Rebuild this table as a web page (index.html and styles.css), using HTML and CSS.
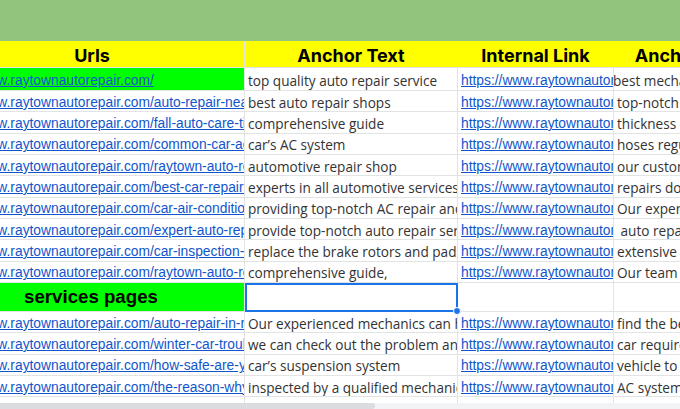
FILE: index.html
```html
<!DOCTYPE html>
<html>
<head>
<meta charset="utf-8">
<link rel="stylesheet" href="styles.css">
</head>
<body>
<div class="page">
  <div class="band"></div>
  <div class="sheet">
    <div class="c h h1">Urls</div>
    <div class="c h">Anchor Text</div>
    <div class="c h">Internal Link</div>
    <div class="c h">Anchor Text</div>

    <div class="c u green"><a>https://www.raytownautorepair.com/</a></div>
    <div class="c t">top quality auto repair service</div>
    <div class="c l"><a>https://www.raytownautorepair.com/auto-repair</a></div>
    <div class="c t d1">best mechanics in raytown</div>

    <div class="c u"><a>https://www.raytownautorepair.com/auto-repair-near-me</a></div>
    <div class="c t">best auto repair shops</div>
    <div class="c l"><a>https://www.raytownautorepair.com/</a></div>
    <div class="c t">top-notch service</div>

    <div class="c u"><a>https://www.raytownautorepair.com/fall-auto-care-tips</a></div>
    <div class="c t">comprehensive guide</div>
    <div class="c l"><a>https://www.raytownautorepair.com/</a></div>
    <div class="c t">thickness of</div>

    <div class="c u"><a>https://www.raytownautorepair.com/common-car-ac-problems</a></div>
    <div class="c t">car’s AC system</div>
    <div class="c l"><a>https://www.raytownautorepair.com/</a></div>
    <div class="c t">hoses regularly</div>

    <div class="c u"><a>https://www.raytownautorepair.com/raytown-auto-repair</a></div>
    <div class="c t">automotive repair shop</div>
    <div class="c l"><a>https://www.raytownautorepair.com/</a></div>
    <div class="c t">our customers</div>

    <div class="c u"><a>https://www.raytownautorepair.com/best-car-repair-shop</a></div>
    <div class="c t">experts in all automotive services</div>
    <div class="c l"><a>https://www.raytownautorepair.com/</a></div>
    <div class="c t">repairs done</div>

    <div class="c u"><a>https://www.raytownautorepair.com/car-air-conditioning</a></div>
    <div class="c t">providing top-notch AC repair and</div>
    <div class="c l"><a>https://www.raytownautorepair.com/</a></div>
    <div class="c t">Our experts</div>

    <div class="c u"><a>https://www.raytownautorepair.com/expert-auto-repair</a></div>
    <div class="c t">provide top-notch auto repair services</div>
    <div class="c l"><a>https://www.raytownautorepair.com/</a></div>
    <div class="c t">&nbsp;auto repair</div>

    <div class="c u"><a>https://www.raytownautorepair.com/car-inspection-checklist</a></div>
    <div class="c t">replace the brake rotors and pads</div>
    <div class="c l"><a>https://www.raytownautorepair.com/</a></div>
    <div class="c t">extensive</div>

    <div class="c u"><a>https://www.raytownautorepair.com/raytown-auto-repair-guide</a></div>
    <div class="c t">comprehensive guide,</div>
    <div class="c l"><a>https://www.raytownautorepair.com/</a></div>
    <div class="c t">Our team</div>

    <div class="c s green">services pages</div>
    <div class="c sel"><span class="handle"></span></div>
    <div class="c"></div>
    <div class="c"></div>

    <div class="c u"><a>https://www.raytownautorepair.com/auto-repair-in-raytown</a></div>
    <div class="c t">Our experienced mechanics can help</div>
    <div class="c l"><a>https://www.raytownautorepair.com/</a></div>
    <div class="c t">find the best</div>

    <div class="c u"><a>https://www.raytownautorepair.com/winter-car-trouble</a></div>
    <div class="c t">we can check out the problem and</div>
    <div class="c l"><a>https://www.raytownautorepair.com/</a></div>
    <div class="c t">car requires</div>

    <div class="c u"><a>https://www.raytownautorepair.com/how-safe-are-your-tires</a></div>
    <div class="c t">car’s suspension system</div>
    <div class="c l"><a>https://www.raytownautorepair.com/</a></div>
    <div class="c t">vehicle to</div>

    <div class="c u"><a>https://www.raytownautorepair.com/the-reason-why</a></div>
    <div class="c t">inspected by a qualified mechanic</div>
    <div class="c l"><a>https://www.raytownautorepair.com/</a></div>
    <div class="c t">AC system</div>

    <div class="c"></div>
    <div class="c"></div>
    <div class="c"></div>
    <div class="c"></div>
  </div>
  <div class="scrollbar"><div class="thumb"></div></div>
</div>
</body>
</html>
```
FILE: styles.css
```css
html, body {
  margin: 0;
  padding: 0;
  background: #ffffff;
}
.page {
  position: relative;
  width: 680px;
  height: 409px;
  overflow: hidden;
}
.band {
  height: 41px;
  background: #93c47d;
}
.sheet {
  display: grid;
  grid-template-columns: 312px 213px 156px 150px;
  grid-template-rows: 27px 23px repeat(9, 21.33px) 29px repeat(5, 21.33px);
  margin-left: -67px;
  width: max-content;
}
.c {
  box-sizing: border-box;
  border-right: 1px solid #e2e3e3;
  border-bottom: 1px solid #e2e3e3;
  overflow: hidden;
  white-space: nowrap;
  padding: 0 3px;
  display: flex;
  align-items: center;
  position: relative;
}
.h {
  background: #ffff00;
  justify-content: center;
  font-family: Inter, "Liberation Sans", sans-serif;
  font-weight: 700;
  font-size: 18px;
  color: #000;
  padding-top: 3px;
}
.h1 {
  padding-left: 10px;
}
.green {
  background: #00ff00;
}
.u a, .l a {
  font-family: "Liberation Sans", Arial, sans-serif;
  font-size: 13.8px;
  color: #1155cc;
  text-decoration: underline;
}
.u, .l, .t {
  padding-top: 2px;
}
.t {
  font-family: "Open Sans", "Noto Sans", sans-serif;
  font-size: 13.6px;
  color: #333333;
}
.d1 {
  text-indent: -4px;
}
.s {
  justify-content: center;
  font-family: "Liberation Sans", Arial, sans-serif;
  font-weight: 700;
  font-size: 18.67px;
  color: #000;
  padding-left: 8px;
}
.sel {
  border: 2px solid #1a73e8;
  overflow: visible;
  z-index: 2;
}
.handle {
  position: absolute;
  right: -5px;
  bottom: -5px;
  width: 6px;
  height: 6px;
  border-radius: 50%;
  background: #1a73e8;
  border: 1px solid #ffffff;
}
.scrollbar {
  position: absolute;
  left: 0;
  right: 0;
  bottom: 0;
  height: 6px;
  background: #f1f3f4;
  z-index: 3;
}
.thumb {
  width: 375px;
  height: 100%;
  background: #dadce0;
  border-radius: 0 4px 4px 0;
}
```
